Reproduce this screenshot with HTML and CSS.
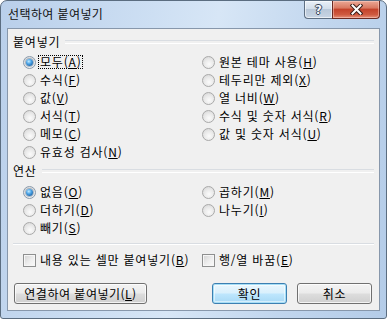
FILE: index.html
```html
<!DOCTYPE html>
<html lang="ko">
<head>
<meta charset="utf-8">
<title>선택하여 붙여넣기</title>
<link rel="stylesheet" href="styles.css">
</head>
<body>
<div class="window">
  <div class="titlebar">
    <span class="title">선택하여 붙여넣기</span>
    <div class="caption-btns">
      <div class="cbtn help"><span class="q">?</span></div>
      <div class="cbtn close">
        <svg width="13" height="11" viewBox="0 0 13 11">
          <path d="M2.5 1.5 L10.5 9.5 M10.5 1.5 L2.5 9.5" stroke="#3a1d18" stroke-width="4" stroke-linecap="square" fill="none"/>
          <path d="M2.5 1.5 L10.5 9.5 M10.5 1.5 L2.5 9.5" stroke="#ffffff" stroke-width="2" stroke-linecap="square" fill="none"/>
        </svg>
      </div>
    </div>
  </div>
  <div class="client">
    <div class="group-head"><span>붙여넣기</span></div>
    <div class="grid paste">
      <div class="opt"><span class="radio checked"></span><span class="lbl focus">모두(<u>A</u>)</span></div>
      <div class="opt"><span class="radio"></span><span class="lbl">수식(<u>F</u>)</span></div>
      <div class="opt"><span class="radio"></span><span class="lbl">값(<u>V</u>)</span></div>
      <div class="opt"><span class="radio"></span><span class="lbl">서식(<u>T</u>)</span></div>
      <div class="opt"><span class="radio"></span><span class="lbl">메모(<u>C</u>)</span></div>
      <div class="opt"><span class="radio"></span><span class="lbl">유효성 검사(<u>N</u>)</span></div>
      <div class="opt"><span class="radio"></span><span class="lbl">원본 테마 사용(<u>H</u>)</span></div>
      <div class="opt"><span class="radio"></span><span class="lbl">테두리만 제외(<u>X</u>)</span></div>
      <div class="opt"><span class="radio"></span><span class="lbl">열 너비(<u>W</u>)</span></div>
      <div class="opt"><span class="radio"></span><span class="lbl">수식 및 숫자 서식(<u>R</u>)</span></div>
      <div class="opt"><span class="radio"></span><span class="lbl">값 및 숫자 서식(<u>U</u>)</span></div>
    </div>
    <div class="group-head op-head"><span>연산</span></div>
    <div class="grid op">
      <div class="opt"><span class="radio checked"></span><span class="lbl">없음(<u>O</u>)</span></div>
      <div class="opt"><span class="radio"></span><span class="lbl">더하기(<u>D</u>)</span></div>
      <div class="opt"><span class="radio"></span><span class="lbl">빼기(<u>S</u>)</span></div>
      <div class="opt"><span class="radio"></span><span class="lbl">곱하기(<u>M</u>)</span></div>
      <div class="opt"><span class="radio"></span><span class="lbl">나누기(<u>I</u>)</span></div>
    </div>
    <div class="sep"></div>
    <div class="grid checks">
      <div class="opt"><span class="check"></span><span class="lbl">내용 있는 셀만 붙여넣기(<u>B</u>)</span></div>
      <div class="opt"><span class="check"></span><span class="lbl">행/열 바꿈(<u>E</u>)</span></div>
    </div>
    <div class="buttons">
      <div class="btn link">연결하여 붙여넣기(<u>L</u>)</div>
      <div class="btn ok default">확인</div>
      <div class="btn cancel">취소</div>
    </div>
  </div>
</div>
</body>
</html>
```

FILE: styles.css
```css
* { box-sizing: border-box; }
html, body { margin: 0; padding: 0; }
body {
  width: 387px;
  height: 319px;
  overflow: hidden;
  background: #ffffff;
  font-family: "Noto Sans CJK KR", "Noto Sans", sans-serif;
  font-size: 12px;
  letter-spacing: 0.8px;
  color: #000;
}
.window {
  width: 387px;
  height: 319px;
  border: 1px solid #5b6d80;
  border-radius: 7px 7px 3px 3px;
  background: linear-gradient(100deg, #b9cfea 0%, #cddff3 35%, #d7e6f6 50%, #c1d6ee 75%, #b4cce8 100%);
  padding: 0 6px 7px 6px;
  display: flex;
  flex-direction: column;
}
.titlebar {
  height: 27px;
  display: flex;
  align-items: flex-start;
}
.title {
  margin-top: 5px;
  padding-left: 1px;
  line-height: 16px;
  letter-spacing: 0.4px;
  color: #111;
}
.caption-btns {
  margin-left: auto;
  display: flex;
  height: 18px;
}
.cbtn {
  height: 18px;
  display: flex;
  align-items: center;
  justify-content: center;
  border: 1px solid #5e6f83;
  border-top: none;
}
.help {
  width: 28px;
  border-radius: 0 0 0 4px;
  border-right: none;
  background: linear-gradient(#e9f0f8 0%, #d3deea 45%, #b9c8d9 50%, #c8d5e4 100%);
  box-shadow: inset 0 0 0 1px rgba(255,255,255,0.6);
}
.q {
  font-family: "DejaVu Sans", sans-serif;
  font-weight: bold;
  font-size: 12px;
  line-height: 12px;
  letter-spacing: 0;
  color: #f4f7fb;
  text-shadow: 1px 0 0 #34455a, -1px 0 0 #34455a, 0 1px 0 #34455a, 0 -1px 0 #34455a;
}
.close {
  width: 48px;
  border-radius: 0 0 4px 0;
  border-color: #6b2a22;
  background: linear-gradient(#eaa896 0%, #d97a63 40%, #c4432b 50%, #cf5a40 80%, #e6917a 100%);
  box-shadow: inset 0 0 0 1px rgba(255,220,210,0.45);
}
.close svg { display: block; }

.client {
  height: 283px;
  border: 1px solid #8797ab;
  background: #f0f0f0;
  display: flex;
  flex-direction: column;
}
.group-head {
  margin-top: 5px;
  height: 16px;
  padding: 0 5px;
  display: flex;
  align-items: center;
  line-height: 16px;
}
.group-head::after {
  content: "";
  flex: 1;
  height: 2px;
  margin-left: 5px;
  border-top: 1px solid #d9dde2;
  border-bottom: 1px solid #ffffff;
}
.op-head { margin-top: 2px; }

.grid {
  display: grid;
  grid-template-columns: 179px 1fr;
  grid-auto-flow: column;
  padding-left: 15px;
}
.paste { margin-top: 3px; grid-template-rows: repeat(6, 18px); }
.op { margin-top: 4px; grid-template-rows: repeat(3, 18px); }
.checks { margin-top: 6px; grid-template-rows: 18px; }

.sep {
  margin: 6px 5px 0 5px;
  height: 2px;
  border-top: 1px solid #d9dde2;
  border-bottom: 1px solid #ffffff;
}

.opt {
  display: flex;
  align-items: center;
  height: 18px;
  white-space: nowrap;
}
.lbl {
  margin-left: 2px;
  border: 1px dotted transparent;
  padding: 0 1px 0 1px;
  height: 14px;
  line-height: 12px;
}
.lbl.focus { border-color: #000; padding-right: 0; }
u {
  text-decoration: underline;
  text-underline-offset: 1px;
  text-decoration-thickness: 1px;
}

.radio {
  position: relative;
  width: 13px;
  height: 13px;
  flex: none;
  border-radius: 50%;
  border: 1px solid #a9a9a9;
  background: radial-gradient(circle at 55% 65%, #fbfbfb 0%, #ebebeb 45%, #d2d2d2 100%);
}
.radio.checked { border-color: #8a9aab; }
.radio.checked::after {
  content: "";
  position: absolute;
  left: 2px;
  top: 2px;
  width: 7px;
  height: 7px;
  border-radius: 50%;
  background: radial-gradient(circle at 40% 35%, #c4ecff 0%, #4aa3e6 40%, #1b5a9a 85%);
  box-shadow: 0 0 0 1px rgba(40,80,120,0.35);
}

.check {
  width: 13px;
  height: 13px;
  flex: none;
  border: 1px solid #8e8f8f;
  background: linear-gradient(135deg, #d2d2d2 0%, #eeeeee 55%, #fafafa 100%);
  box-shadow: inset 0 0 0 1px #f6f6f6;
}

.buttons {
  margin-top: 14px;
  height: 21px;
  display: flex;
  padding: 0 7px 0 6px;
}
.btn {
  height: 21px;
  border: 1px solid #707070;
  border-radius: 3px;
  background: linear-gradient(#f3f3f3 0%, #ebebeb 48%, #dddddd 52%, #cfcfcf 100%);
  box-shadow: inset 0 0 0 1px rgba(255,255,255,0.75);
  text-align: center;
  line-height: 19px;
  white-space: nowrap;
}
.link { width: 133px; letter-spacing: 0.5px; }
.ok { width: 75px; margin-left: auto; }
.cancel { width: 75px; margin-left: 10px; }
.default {
  border-color: #3c7fb1;
  background: linear-gradient(#eaf6fd 0%, #d9f0fc 48%, #bee6fd 52%, #a7d9f5 100%);
  box-shadow: inset 0 0 0 1px #a6def6, inset 0 0 0 2px rgba(255,255,255,0.5);
}
```
